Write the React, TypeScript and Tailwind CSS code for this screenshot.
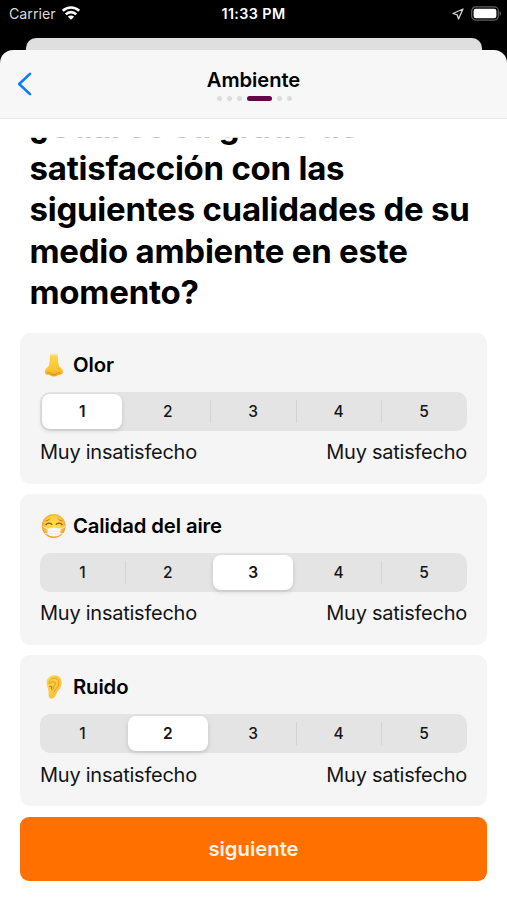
import { useState } from 'react';
import type { ReactNode } from 'react';

const options = [1, 2, 3, 4, 5];

function WifiIcon() {
  return (
    <svg className="h-[14px] w-[18px]" viewBox="0 0 18 14" fill="none" stroke="#fff" strokeWidth="2.6">
      <path d="M0.8 4.9a11.7 11.7 0 0 1 16.4 0" />
      <path d="M3.8 8.3a7.4 7.4 0 0 1 10.4 0" />
      <path d="M9 13.8 5.9 10.7a4.4 4.4 0 0 1 6.2 0z" fill="#fff" stroke="none" />
    </svg>
  );
}

function LocationIcon() {
  return (
    <svg className="h-[12px] w-[12px]" viewBox="0 0 12 12" fill="none" stroke="#d4d4d4" strokeWidth="1.3" strokeLinejoin="round">
      <path d="M11 1 1 5.5l4.2 1.3L6.5 11z" />
    </svg>
  );
}

function BatteryIcon() {
  return (
    <svg className="h-[15px] w-[31px]" viewBox="0 0 31 15">
      <rect x="0.7" y="0.9" width="26.6" height="13.2" rx="4" fill="none" stroke="#626262" strokeWidth="1.2" />
      <rect x="2.6" y="2.7" width="22.8" height="9.6" rx="2.3" fill="#fff" />
      <path d="M28.6 5.2c1.9.6 1.9 4 0 4.6z" fill="#626262" />
    </svg>
  );
}

function NoseIcon() {
  return (
    <svg className="h-[26px] w-[26px]" viewBox="-0.5 0 26 26">
      <defs>
        <linearGradient id="nose" x1="0" y1="0" x2="0" y2="1">
          <stop offset="0" stopColor="#fcd23e" stopOpacity="0" />
          <stop offset="0.15" stopColor="#fcd545" />
          <stop offset="0.7" stopColor="#fbc42f" />
          <stop offset="1" stopColor="#f0a51f" />
        </linearGradient>
      </defs>
      <path
        d="M9.4 1h8c-.2 5 0 10.4 1.4 13.6 1.3 1.4 3.7 2.5 3.7 5.2 0 2.3-1.7 3.3-4 3-1.3 0-2.3 1.8-5.1 1.8s-3.8-1.8-5.1-1.8c-2.3.3-4-.7-4-3 0-2.7 2.4-3.8 3.7-5.2 1.4-3.2 1.6-8.6 1.4-13.6z"
        fill="url(#nose)"
      />
      <path d="M6.7 21.3c1.3-1.2 2.7-.8 3.5.4 1.7 1.3 4.5 1.3 6.2 0 .8-1.2 2.2-1.6 3.5-.4" fill="none" stroke="#d98a1c" strokeWidth="0.9" strokeLinecap="round" />
    </svg>
  );
}

function MaskIcon() {
  return (
    <svg className="h-[26px] w-[26px]" viewBox="-1 0 26 26">
      <defs>
        <radialGradient id="face" cx="0.5" cy="0.45" r="0.58">
          <stop offset="0" stopColor="#ffe04a" />
          <stop offset="0.6" stopColor="#fdcd45" />
          <stop offset="1" stopColor="#ee8f25" />
        </radialGradient>
      </defs>
      <circle cx="12.7" cy="13" r="11.9" fill="url(#face)" />
      <path d="M1.7 13.5 7 16M24.3 13.5 19 16M3.8 20.5 7 21M22.2 20.5 19 21" stroke="#f4eee7" strokeWidth="1" />
      <path d="M6.6 15.5c2.4 0 4.4-1 6.4-1s4 1 6.4 1v6c-1.2 1.2-3.8 2-6.4 2s-5.2-.8-6.4-2z" fill="#fbf8f4" />
      <path d="M7 18.3h12M7 20.9h12" stroke="#e3dedb" strokeWidth="0.5" />
      <path d="M5 11.7c1.3-2.1 4.4-2.2 5.8-.3M21 11.7c-1.3-2.1-4.4-2.2-5.8-.3" fill="none" stroke="#8a5514" strokeWidth="1.3" strokeLinecap="round" />
      <path d="M5 7.9C6.7 7.6 8 7 8.9 5.9M21 7.9c-1.7-.3-3-.9-3.9-2" fill="none" stroke="#b07420" strokeWidth="0.9" strokeLinecap="round" />
    </svg>
  );
}

function EarIcon() {
  return (
    <svg className="h-[26px] w-[26px]" viewBox="-0.5 0 26 26">
      <defs>
        <linearGradient id="ear" x1="0" y1="0" x2="1" y2="1">
          <stop offset="0" stopColor="#ffd94d" />
          <stop offset="1" stopColor="#f5b935" />
        </linearGradient>
      </defs>
      <path
        d="M6.2 10.2C5.2 5.2 9 1.5 14 1.3c4.9-.1 7.6 3.5 7 8.5-.6 5.1-3.7 6.5-5 9.8-.9 2.9-2.2 5-5 5-2.2 0-3.2-1.7-2.9-4.2.2-2.7-.1-4.3-.8-6z"
        fill="url(#ear)"
      />
      <path d="M8.6 9.4c-.2-3.1 2.2-5.1 5.1-5.1 3.6 0 5.2 2.4 4.5 6-.7 3.5-3.6 4.7-4.5 7.5" fill="none" stroke="#e3a02a" strokeWidth="1" strokeLinecap="round" />
      <path d="M9.5 9.5c1.1-2.4 5-2.5 5.3-.2.3 2-1.9 2.4-1.7 4 .2 1.5-.6 2.6-2 2.6" fill="none" stroke="#dc9524" strokeWidth="1" strokeLinecap="round" />
      <path d="M9.3 12.5c1.4-.7 2.3.6 1.6 2" fill="none" stroke="#bf7a1c" strokeWidth="1.2" strokeLinecap="round" />
    </svg>
  );
}

function StatusBar() {
  return (
    <div className="grid h-[38px] grid-cols-3 items-start px-[9px] text-white">
      <div className="flex gap-[6px] pt-[5px]">
        <span className="text-[14.2px] leading-[18px] text-[#d8d8d8]">Carrier</span>
        <span className="pt-[1px]">
          <WifiIcon />
        </span>
      </div>
      <span className="pt-[5px] text-center text-[14.3px] leading-[18px] font-semibold tracking-[0.4px]">11:33 PM</span>
      <div className="flex items-center justify-end gap-[7px] pt-[6px]">
        <LocationIcon />
        <span className="-mr-[4px]">
          <BatteryIcon />
        </span>
      </div>
    </div>
  );
}

function Header() {
  return (
    <div className="grid h-[69px] grid-cols-[60px_1fr_60px] items-start rounded-t-[13px] border-b border-[#e8e8e8] bg-[#f7f7f7]">
      <button className="pt-[21px] pl-[16.5px]" aria-label="Atrás">
        <svg className="h-[26px] w-[16px]" viewBox="0 0 16 26" fill="none" stroke="#0a7aff" strokeWidth="2.6" strokeLinecap="round" strokeLinejoin="round">
          <path d="M13 2.9 2.2 13 13 23.1" />
        </svg>
      </button>
      <div className="flex flex-col items-center pt-[17px]">
        <h1 className="text-[20.2px] leading-[26px] font-semibold tracking-[-0.05px]">Ambiente</h1>
        <div className="mt-[3px] flex items-center gap-[5px] pl-[1px]">
          <i className="size-[5px] rounded-full bg-[#dcdcdc]" />
          <i className="size-[5px] rounded-full bg-[#dcdcdc]" />
          <i className="size-[5px] rounded-full bg-[#dcdcdc]" />
          <i className="h-[5px] w-[25px] rounded-full bg-[#630546]" />
          <i className="size-[5px] rounded-full bg-[#dcdcdc]" />
          <i className="size-[5px] rounded-full bg-[#dcdcdc]" />
        </div>
      </div>
    </div>
  );
}

function RatingCard({ icon, title, initial }: { icon: ReactNode; title: string; initial: number }) {
  const [value, setValue] = useState(initial);

  return (
    <div className="h-[151.3px] rounded-[10px] bg-[#f5f5f5] px-[20px] pt-[18px]">
      <div className="flex h-[28px] items-center gap-[7px]">
        {icon}
        <h3 className="text-[20.3px] font-semibold tracking-[-0.12px]">{title}</h3>
      </div>
      <div className="mt-[13px] grid h-[39px] grid-cols-5 rounded-[10px] bg-[#e4e4e4]">
        {options.map((option) => (
          <button
            key={option}
            onClick={() => setValue(option)}
            className="relative flex py-[2px] pr-[3px] pl-[2.3px] text-[15.5px] font-medium text-[#151515]"
          >
            {option > 1 && value !== option && value !== option - 1 && (
              <span className="absolute top-[8px] left-[-0.5px] h-[23px] w-px bg-[#d3d3d3]" />
            )}
            <span
              className={
                value === option
                  ? 'flex h-full flex-1 items-center justify-center rounded-[8px] bg-white font-semibold shadow-[0_2px_5px_rgba(0,0,0,0.14)]'
                  : 'flex h-full flex-1 items-center justify-center'
              }
            >
              {option}
            </span>
          </button>
        ))}
      </div>
      <div className="mt-[8.4px] flex justify-between text-[20px] leading-[26px] text-[#141414]">
        <span className="tracking-[-0.25px]">Muy insatisfecho</span>
        <span className="tracking-[-0.25px]">Muy satisfecho</span>
      </div>
    </div>
  );
}

const App = () => {
  return (
    <div className="flex h-[900px] w-[507px] flex-col overflow-hidden bg-black font-[Inter,'Liberation_Sans',sans-serif] text-black">
      <StatusBar />
      <div className="mr-[25px] ml-[26px] h-[12px] rounded-t-[10px] bg-[#dfdfdf]" />
      <div className="flex flex-1 flex-col bg-[linear-gradient(#000_0_20px,#fff_20px)]">
        <Header />
        <main className="flex flex-1 flex-col bg-white px-[20px] pt-[18px]">
          {/* the question is scrolled, only the foot of its first line is left */}
          <div className="flex h-[196px] flex-col justify-end overflow-hidden pb-[19px] pl-[9.5px] [clip-path:inset(0.7px_0_0_0)]">
            <h2 className="text-[33px] leading-[41.6px] font-bold tracking-[-0.25px] whitespace-nowrap">
              ¿Cuál es su grado de
              <br />
              satisfacción con las
              <br />
              siguientes cualidades de su
              <br />
              medio ambiente en este
              <br />
              momento?
            </h2>
          </div>
          <div className="flex flex-col gap-[9.8px]">
            <RatingCard icon={<NoseIcon />} title="Olor" initial={1} />
            <RatingCard icon={<MaskIcon />} title="Calidad del aire" initial={3} />
            <RatingCard icon={<EarIcon />} title="Ruido" initial={2} />
          </div>
          <button className="mt-[10.4px] h-[64px] rounded-[9px] bg-[#ff7000] pt-[1px] text-[20.3px] font-semibold text-[#fff4e5]">
            siguiente
          </button>
        </main>
      </div>
    </div>
  );
};

export default App;
